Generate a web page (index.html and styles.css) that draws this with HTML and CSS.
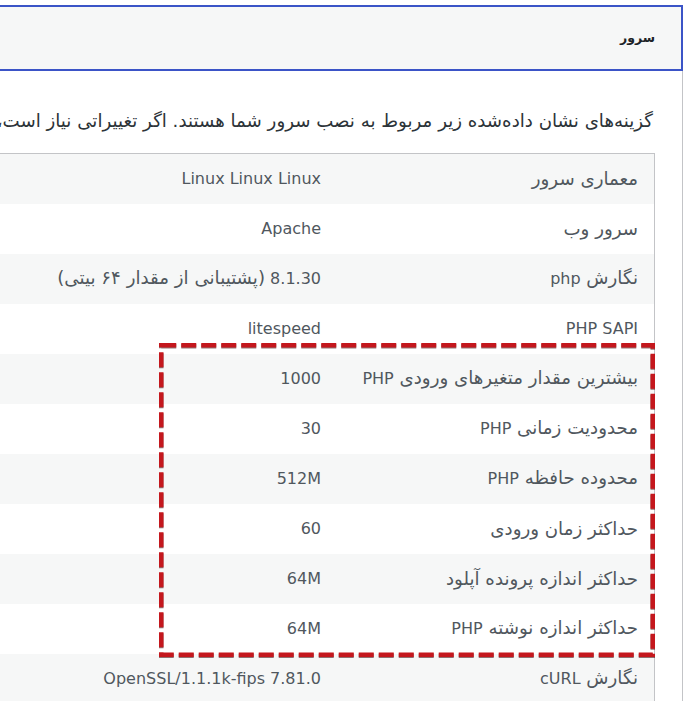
FILE: index.html
```html
<!DOCTYPE html>
<html lang="fa" dir="rtl">
<head>
<meta charset="utf-8">
<title>سرور</title>
<link rel="stylesheet" href="styles.css">
</head>
<body>
<div class="page">
  <div class="accordion">
    <h3 class="acc-heading"><button class="acc-trigger" type="button">سرور</button></h3>
    <div class="acc-panel">
      <p class="intro">گزینه‌های نشان داده‌شده زیر مربوط به نصب سرور شما هستند. اگر تغییراتی نیاز است، ممکن است برای انجام آن به کمک میزبان وب خود نیاز داشته باشید.</p>
      <div class="table-wrap">
        <table class="info-table">
          <tbody>
            <tr><td class="lbl">معماری سرور</td><td class="val">Linux Linux Linux</td></tr>
            <tr><td class="lbl">سرور وب</td><td class="val">Apache</td></tr>
            <tr><td class="lbl">نگارش <span class="en">php</span></td><td class="val">8.1.30 <span class="fa">(پشتیبانی از مقدار ۶۴ بیتی)</span></td></tr>
            <tr><td class="lbl"><span class="en">PHP SAPI</span></td><td class="val">litespeed</td></tr>
            <tr><td class="lbl">بیشترین مقدار متغیرهای ورودی <span class="en">PHP</span></td><td class="val">1000</td></tr>
            <tr><td class="lbl">محدودیت زمانی <span class="en">PHP</span></td><td class="val">30</td></tr>
            <tr><td class="lbl">محدوده حافظه <span class="en">PHP</span></td><td class="val">512M</td></tr>
            <tr><td class="lbl">حداکثر زمان ورودی</td><td class="val">60</td></tr>
            <tr><td class="lbl">حداکثر اندازه پرونده آپلود</td><td class="val">64M</td></tr>
            <tr><td class="lbl">حداکثر اندازه نوشته <span class="en">PHP</span></td><td class="val">64M</td></tr>
            <tr><td class="lbl">نگارش <span class="en">cURL</span></td><td class="val">OpenSSL/1.1.1k-fips 7.81.0</td></tr>
            <tr><td class="lbl"><span class="en">SUHOSIN</span> نصب شده است</td><td class="val"><span class="fa">خیر</span></td></tr>
          </tbody>
        </table>
        <svg class="highlight" width="496" height="314" viewBox="0 0 496 314" aria-hidden="true">
          <rect x="2.25" y="2.25" width="491.5" height="309.5" fill="none" stroke="#c4171d" stroke-width="4.5" stroke-dasharray="15 5"/>
        </svg>
      </div>
    </div>
  </div>
</div>
</body>
</html>
```

FILE: styles.css
```css
html, body {
  margin: 0;
  padding: 0;
  background: #ffffff;
  overflow: hidden;
}

body {
  font-family: "DejaVu Sans", Tahoma, sans-serif;
  color: #50575e;
  font-size: 18.2px;
}

.page {
  padding: 5px 3px 0 0;
  display: flex;
  justify-content: flex-start;
}

.accordion {
  flex: 0 0 auto;
  width: 1500px;
  border-right: 1px solid #c3c4c7;
  min-height: 800px;
}

.acc-heading {
  margin: 0;
}

.acc-trigger {
  display: block;
  width: calc(100% + 1px);
  margin-right: -1px;
  height: 66px;
  box-sizing: border-box;
  border: 2px solid #3b54c7;
  background: #f6f7f7;
  font-family: "DejaVu Sans", Tahoma, sans-serif;
  font-size: 12.5px;
  font-weight: bold;
  color: #1d2327;
  text-align: right;
  padding: 0 26px 2px 0;
  cursor: pointer;
}

.acc-panel {
  padding: 0 27px 0 0;
}

.intro {
  margin: 37px 0 0 0;
  line-height: 26px;
  height: 26px;
  white-space: nowrap;
  padding-right: 2px;
  color: #2c3338;
}

.table-wrap {
  position: relative;
  width: 1060px;
  margin-top: 19px;
}

.info-table {
  width: 1060px;
  border-collapse: collapse;
  border: 1px solid #c3c4c7;
}

.info-table tr {
  height: 50px;
}

.info-table tr:nth-child(odd) {
  background: #f6f7f7;
}

.info-table td {
  padding: 0 16px;
  vertical-align: middle;
  white-space: nowrap;
  text-align: right;
  line-height: 24px;
}

.info-table td.lbl {
  width: 285px;
}

.info-table td.val {
  font-size: 16px;
}

.en {
  font-size: 16px;
}

.fa {
  font-size: 18.2px;
}

.highlight {
  position: absolute;
  top: 190px;
  right: 0;
  filter: drop-shadow(0 1px 0 rgba(60, 0, 0, 0.55));
}
```
